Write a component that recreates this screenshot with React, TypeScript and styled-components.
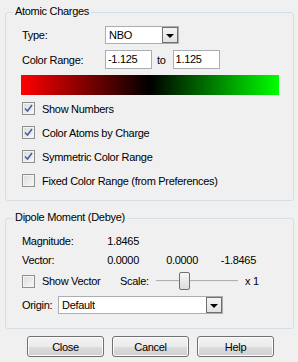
import React from 'react';
import styled, { createGlobalStyle } from 'styled-components';

const GlobalStyle = createGlobalStyle`
  body {
    margin: 0;
    font-family: "Liberation Sans", Arial, sans-serif;
    font-size: 11px;
    letter-spacing: -0.3px;
    color: #000;
  }
`;

const Dialog = styled.div`
  width: 298px;
  height: 362px;
  box-sizing: border-box;
  background: #f0f0f0;
  padding: 12px 4px 0 5px;
  display: flex;
  flex-direction: column;
`;

const Group = styled.div<{ $height: number; $top: number; $gap?: number }>`
  position: relative;
  height: ${({ $height }) => $height}px;
  box-sizing: border-box;
  margin-top: ${({ $top }) => $top}px;
  border: 1px solid #d5dfe5;
  border-radius: 3px;
  padding: ${({ $gap }) => $gap ?? 12}px 0 0 16px;
  display: flex;
  flex-direction: column;
  gap: 6px;
`;

const GroupTitle = styled.span`
  position: absolute;
  left: 7px;
  top: -9px;
  padding: 0 2px;
  background: #f0f0f0;
  line-height: 14px;
`;

const Row = styled.div<{ $h?: number }>`
  display: flex;
  align-items: center;
  height: ${({ $h }) => $h ?? 18}px;
`;

const Label = styled.span<{ $w?: number }>`
  width: ${({ $w }) => ($w ? `${$w}px` : 'auto')};
  flex-shrink: 0;
  white-space: nowrap;
`;

const Combo = styled.div<{ $w: number }>`
  width: ${({ $w }) => $w}px;
  height: 18px;
  box-sizing: border-box;
  border: 1px solid #abadb3;
  background: #fff;
  display: flex;
  align-items: stretch;
`;

const ComboText = styled.span`
  flex: 1;
  padding-left: 3px;
  line-height: 16px;
`;

const DropButton = styled.span`
  width: 16px;
  box-sizing: border-box;
  border: 1px solid #707070;
  background: linear-gradient(#f4f4f4, #e2e2e2);
  display: flex;
  align-items: center;
  justify-content: center;
  &::after {
    content: '';
    border-left: 4px solid transparent;
    border-right: 4px solid transparent;
    border-top: 4px solid #000;
    margin-top: 1px;
  }
`;

const TextBox = styled.div`
  width: 47px;
  height: 19px;
  box-sizing: border-box;
  border: 1px solid #abadb3;
  background: #fff;
  padding-left: 2px;
  line-height: 17px;
`;

const ToText = styled.span`
  margin: 0 7px 0 5px;
`;

const Gradient = styled.div`
  width: 258px;
  height: 20px;
  margin-left: -1px;
  background: linear-gradient(to right, #ff0000, #000 50%, #00ff00);
`;

const Checks = styled.div`
  display: flex;
  flex-direction: column;
  gap: 11px;
  margin-top: 1px;
`;

const CheckRow = styled.div<{ $w?: number }>`
  display: flex;
  align-items: center;
  height: 13px;
  width: ${({ $w }) => ($w ? `${$w}px` : 'auto')};
  flex-shrink: 0;
  white-space: nowrap;
`;

const Box = styled.span`
  width: 13px;
  height: 13px;
  box-sizing: border-box;
  border: 1px solid #8e8f8f;
  background: linear-gradient(135deg, #dcdcdc, #f7f7f7);
  box-shadow: inset 0 0 0 1px #f4f4f4;
  margin-right: 7px;
  flex-shrink: 0;
  display: flex;
  align-items: center;
  justify-content: center;
`;

const Check: React.FC<{ checked?: boolean; label: string; width?: number }> = ({
  checked,
  label,
  width,
}) => (
  <CheckRow $w={width}>
    <Box>
      {checked && (
        <svg width="9" height="9" viewBox="0 0 9 9">
          <path d="M1 4.5 L3.5 7 L8 1" fill="none" stroke="#4a5f97" strokeWidth="1.6" />
        </svg>
      )}
    </Box>
    {label}
  </CheckRow>
);

const Values = styled.div`
  display: grid;
  grid-template-columns: 85px 32px 59px 58px;
  align-items: center;
  height: 13px;
`;

const Num = styled.span`
  text-align: right;
  white-space: nowrap;
`;

const Slider = styled.div`
  position: relative;
  width: 82px;
  height: 18px;
  display: flex;
  align-items: center;
`;

const Track = styled.div`
  flex: 1;
  height: 1px;
  background: #b0b0b0;
  border-bottom: 1px solid #e8e8e8;
`;

const Thumb = styled.div`
  position: absolute;
  left: 23px;
  top: 0;
  width: 11px;
  height: 18px;
  box-sizing: border-box;
  border: 1px solid #707070;
  border-radius: 2px;
  background: linear-gradient(#f6f6f6, #dcdcdc);
`;

const Suffix = styled.span`
  margin-left: 7px;
  white-space: nowrap;
`;

const ButtonBar = styled.div`
  display: flex;
  gap: 8px;
  margin: 7px 0 0 22px;
`;

const Button = styled.button`
  width: 77px;
  height: 21px;
  box-sizing: border-box;
  border: 1px solid #707070;
  border-radius: 3px;
  background: linear-gradient(#f2f2f2 0%, #ebebeb 50%, #dddddd 50%, #cfcfcf 100%);
  box-shadow: inset 0 0 0 1px #fcfcfc;
  font: inherit;
  letter-spacing: inherit;
  color: #000;
  padding: 0;
`;

export default function App() {
  return (
    <>
      <GlobalStyle />
      <Dialog>
        <Group $height={189} $top={0} $gap={13}>
          <GroupTitle>Atomic Charges</GroupTitle>
          <Row>
            <Label $w={83}>Type:</Label>
            <Combo $w={74}>
              <ComboText>NBO</ComboText>
              <DropButton />
            </Combo>
          </Row>
          <Row $h={19}>
            <Label $w={83}>Color Range:</Label>
            <TextBox>-1.125</TextBox>
            <ToText>to</ToText>
            <TextBox>1.125</TextBox>
          </Row>
          <Gradient />
          <Checks>
            <Check checked label="Show Numbers" />
            <Check checked label="Color Atoms by Charge" />
            <Check checked label="Symmetric Color Range" />
            <Check label="Fixed Color Range (from Preferences)" />
          </Checks>
        </Group>
        <Group $height={111} $top={17} $gap={15}>
          <GroupTitle>Dipole Moment (Debye)</GroupTitle>
          <Values>
            <Label>Magnitude:</Label>
            <Num>1.8465</Num>
          </Values>
          <Values>
            <Label>Vector:</Label>
            <Num>0.0000</Num>
            <Num>0.0000</Num>
            <Num>-1.8465</Num>
          </Values>
          <Row>
            <Check label="Show Vector" width={98} />
            <Label $w={36}>Scale:</Label>
            <Slider>
              <Track />
              <Thumb />
            </Slider>
            <Suffix>x 1</Suffix>
          </Row>
          <Row>
            <Label $w={36}>Origin:</Label>
            <Combo $w={165}>
              <ComboText>Default</ComboText>
              <DropButton />
            </Combo>
          </Row>
        </Group>
        <ButtonBar>
          <Button>Close</Button>
          <Button>Cancel</Button>
          <Button>Help</Button>
        </ButtonBar>
      </Dialog>
    </>
  );
}
